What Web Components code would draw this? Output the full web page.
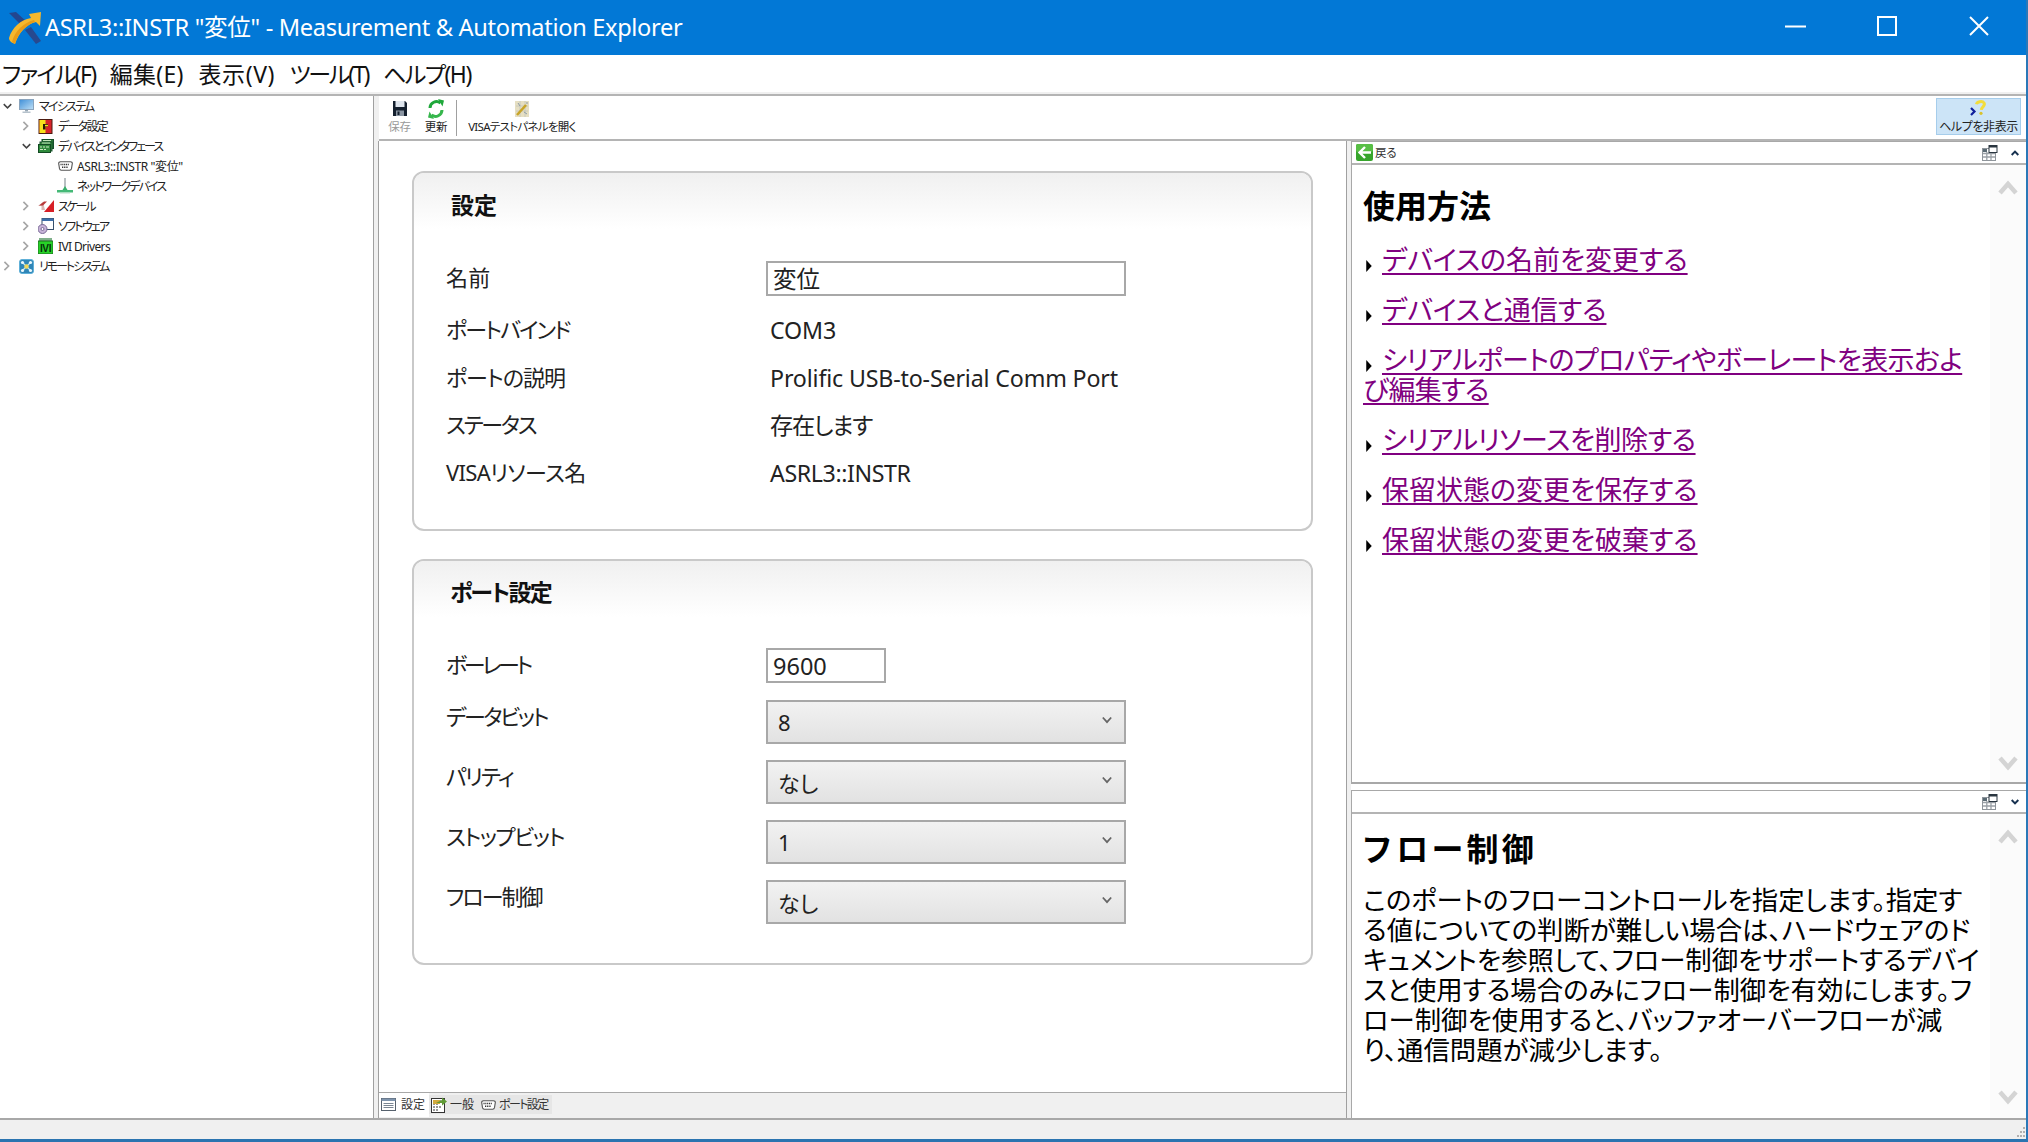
<!DOCTYPE html>
<html lang="ja">
<head>
<meta charset="utf-8">
<title>Measurement &amp; Automation Explorer</title>
<style>
html,body{margin:0;padding:0;background:#fff;}
body{font-family:"Noto Sans","Noto Sans CJK JP",sans-serif;font-feature-settings:"palt";color:#111;overflow:hidden;}
</style>
</head>
<body>
<mx-app>
  <mx-titlebar>ASRL3::INSTR "変位" - Measurement &amp; Automation Explorer</mx-titlebar>
  <mx-menubar>
    <mx-menu style="--ls:-1.7px;--mr:-2.5px">ファイル(F)</mx-menu><mx-menu style="--ls:.3px">編集(E)</mx-menu><mx-menu style="--ls:.6px">表示(V)</mx-menu><mx-menu style="--ls:-2.2px;--mr:-2.5px">ツール(T)</mx-menu><mx-menu style="--ls:-1.5px">ヘルプ(H)</mx-menu>
  </mx-menubar>
  <mx-workspace>
    <mx-tree slot="tree">
      <mx-node level="0" open="down" icon="monitor" style="--ls:-1.77px">マイシステム</mx-node>
      <mx-node level="1" open="right" icon="data" style="--ls:-1.7px">データ設定</mx-node>
      <mx-node level="1" open="down" icon="boards" style="--ls:-1.96px">デバイスとインタフェース</mx-node>
      <mx-node level="2" icon="serial" style="--ls:-.37px">ASRL3::INSTR "変位"</mx-node>
      <mx-node level="2" icon="network" style="--ls:-1.88px">ネットワークデバイス</mx-node>
      <mx-node level="1" open="right" icon="scale" style="--ls:-2.2px">スケール</mx-node>
      <mx-node level="1" open="right" icon="software" style="--ls:-1.77px">ソフトウェア</mx-node>
      <mx-node level="1" open="right" icon="ivi" style="--ls:-.62px">IVI Drivers</mx-node>
      <mx-node level="0" open="right" icon="remote" style="--ls:-2.07px">リモートシステム</mx-node>
    </mx-tree>
    <mx-toolbar slot="toolbar">
      <mx-tool icon="save" disabled style="margin-left:9px;width:23px">保存</mx-tool>
      <mx-tool icon="refresh" style="margin-left:13px;width:24px">更新</mx-tool>
      <mx-divider></mx-divider>
      <mx-tool icon="visa" style="width:110px;--ls:-.7px">VISAテストパネルを開く</mx-tool>
      <mx-toggle>ヘルプを非表示</mx-toggle>
    </mx-toolbar>
    <mx-main slot="main">
      <mx-card heading="設定" style="height:360px;margin-top:30px">
        <mx-field label="名前" style="--ls:.3px"><mx-input style="width:360px">変位</mx-input></mx-field>
        <mx-field label="ポートバインド" style="margin-top:11px;--ls:-1.9px"><mx-value>COM3</mx-value></mx-field>
        <mx-field label="ポートの説明" style="--ls:-1px"><mx-value>Prolific USB-to-Serial Comm Port</mx-value></mx-field>
        <mx-field label="ステータス" style="--ls:-2.2px"><mx-value style="--ls:-1.3px">存在します</mx-value></mx-field>
        <mx-field label="VISAリソース名" style="--ls:-.65px"><mx-value style="--ls:-.4px">ASRL3::INSTR</mx-value></mx-field>
      </mx-card>
      <mx-card heading="ポート設定" second style="height:406px;margin-top:28px">
        <mx-field label="ボーレート" style="margin-top:-1px;--ls:-3.4px"><mx-input style="width:120px">9600</mx-input></mx-field>
        <mx-field label="データビット" raised style="margin-top:17px;--ls:-2.5px"><mx-select>8</mx-select></mx-field>
        <mx-field label="パリティ" raised style="margin-top:16px;--ls:-1.9px"><mx-select>なし</mx-select></mx-field>
        <mx-field label="ストップビット" raised style="margin-top:16px;--ls:-1.55px"><mx-select>1</mx-select></mx-field>
        <mx-field label="フロー制御" raised style="margin-top:16px;--ls:-2px"><mx-select>なし</mx-select></mx-field>
      </mx-card>
    </mx-main>
    <mx-tabs slot="tabs">
      <mx-tab selected icon="form">設定</mx-tab>
      <mx-tab icon="general">一般</mx-tab>
      <mx-tab icon="serial" style="--ls:-1.6px;padding:0 4px 0 3px">ポート設定</mx-tab>
    </mx-tabs>
    <mx-help slot="help">
      <mx-helppane back="戻る" chevron="up" style="height:643px">
        <mx-helphead>使用方法</mx-helphead>
        <mx-link>デバイスの名前を変更する</mx-link>
        <mx-link>デバイスと通信する</mx-link>
        <mx-link style="--ls:-.6px">シリアルポートのプロパティやボーレートを表示およ<br>び編集する</mx-link>
        <mx-link style="--ls:-.4px">シリアルリソースを削除する</mx-link>
        <mx-link>保留状態の変更を保存する</mx-link>
        <mx-link>保留状態の変更を破棄する</mx-link>
      </mx-helppane>
      <mx-helppane chevron="down" style="height:328px;margin-top:6px;border-bottom:0;--sbb:13px">
        <mx-helphead second>フロー制御</mx-helphead>
        <mx-helptext>このポートのフローコントロールを指定します。指定す<br>る値についての判断が難しい場合は、ハードウェアのド<br>キュメントを参照して、フロー制御をサポートするデバイ<br>スと使用する場合のみにフロー制御を有効にします。フ<br>ロー制御を使用すると、バッファオーバーフローが減<br>り、通信問題が減少します。</mx-helptext>
      </mx-helppane>
    </mx-help>
  </mx-workspace>
  <mx-statusbar></mx-statusbar>
</mx-app>

<script>
const ICONS = {
  monitor:`<svg width="15" height="14" viewBox="0 0 15 14"><defs><linearGradient id="m" x1="0" y1="0" x2="1" y2="1"><stop offset="0" stop-color="#3f8fd8"/><stop offset="1" stop-color="#bfe0f6"/></linearGradient></defs><rect x="0.5" y="0.5" width="14" height="10" fill="url(#m)" stroke="#8aa4bd"/><rect x="6" y="11" width="3" height="1.5" fill="#98a8b6"/><rect x="3.5" y="12.5" width="8" height="1.5" fill="#b6c2cc"/></svg>`,
  data:`<svg width="15" height="15" viewBox="0 0 15 15"><rect x="1" y="0.5" width="13" height="14" fill="#d8242a" stroke="#4a1a10"/><rect x="1.5" y="1" width="6" height="13" fill="#f6e21c"/><path d="M5 5h5v2.500h-2.500v3h-2.500z" fill="#2a1a08"/><rect x="7" y="5.800" width="3" height="1.500" fill="#f6e21c"/></svg>`,
  boards:`<svg width="16" height="15" viewBox="0 0 16 15"><rect x="4" y="0.500" width="11.500" height="9" fill="#2c7a3a" stroke="#16502a"/><rect x="2" y="3" width="12" height="9" fill="#3d9446" stroke="#16502a"/><rect x="0.500" y="5.500" width="12" height="8" fill="#2f8a3c" stroke="#124a22"/><path d="M2 8h2M5 8h2M8 8h3M2 10.500h3M6 10.500h2" stroke="#cdebc4" stroke-width="1"/><path d="M5 1.500h8M4 4h8" stroke="#bfe4b8"/></svg>`,
  serial:`<svg width="16" height="10" viewBox="0 0 16 10"><path d="M2.500 .7h11c1 0 2 .8 1.800 2l-.8 5c-.2 1-1 1.600-1.800 1.600h-8.400c-.8 0-1.600-.6-1.800-1.600l-.8-5c-.2-1.200.8-2 1.800-2z" fill="#fff" stroke="#555" stroke-width="1.100"/><path d="M3.500 3.500h9M5 6.300h6" stroke="#333" stroke-width="1.500" stroke-dasharray="1.100 .7"/></svg>`,
  network:`<svg width="16" height="16" viewBox="0 0 16 16"><rect x="7.200" y="0" width="1.600" height="10" fill="#a9b0b3"/><path d="M8 8l2.500 4h-5z" fill="#37b06a"/><rect x="0" y="12" width="16" height="2.500" fill="#45b977"/><rect x="3" y="14.500" width="10" height="1" fill="#b5dfc8"/></svg>`,
  scale:`<svg width="16" height="12" viewBox="0 0 16 12"><path d="M16 0v12H6z" fill="#d71f26"/><path d="M5 2L0 6h3.500v4H7z" fill="#dbb7b4"/><path d="M6 1.500L1 5.500h4l4-4z" fill="#b83a3a"/></svg>`,
  software:`<svg width="16" height="16" viewBox="0 0 16 16"><rect x="4" y="0.500" width="11.500" height="11" fill="#fff" stroke="#38506b"/><rect x="4" y="0.500" width="11.500" height="2.500" fill="#3c6ea8"/><circle cx="4.500" cy="11" r="4.500" fill="#c7b4d8" stroke="#7a6a96"/><circle cx="4.500" cy="11" r="1.500" fill="#fff" stroke="#7a6a96"/></svg>`,
  ivi:`<svg width="15" height="16" viewBox="0 0 15 16"><rect x="1" y="0" width="13" height="4" fill="#7fb08a"/><rect x="0" y="3" width="15" height="13" fill="#27d227" stroke="#1c6a20"/><text x="7.500" y="13.500" text-anchor="middle" font-family="Liberation Sans" font-weight="700" font-size="10" fill="#04300a" letter-spacing="-.4">IVI</text></svg>`,
  remote:`<svg width="15" height="15" viewBox="0 0 15 15"><rect x="0.500" y="0.500" width="14" height="14" rx="2.500" fill="#2f86b8" stroke="#5fb0d8"/><path d="M3 3l9 9M12 3l-9 9" stroke="#bfe6f6" stroke-width="1.300"/><circle cx="3.500" cy="3.500" r="1.600" fill="#e9f7fb"/><circle cx="11.500" cy="3.500" r="1.600" fill="#e9f7fb"/><circle cx="3.500" cy="11.500" r="1.600" fill="#e9f7fb"/><circle cx="11.500" cy="11.500" r="1.600" fill="#e9f7fb"/><circle cx="7.500" cy="7.500" r="2.200" fill="#f3d95a"/></svg>`,
  save:`<svg width="14" height="15" viewBox="0 0 14 15"><path d="M0 0h12l2 2v13H0z" fill="#14202e"/><rect x="2.500" y="0" width="9" height="6" fill="#dfe6ee"/><rect x="3" y="9.500" width="8" height="5.500" fill="#8b96a3"/><rect x="4.500" y="10.500" width="2" height="3.500" fill="#14202e"/></svg>`,
  refresh:`<svg width="18" height="20" viewBox="0 0 18 20"><path d="M3 9a6.500 6.500 0 0 1 10.500-5" fill="none" stroke="#1fa83a" stroke-width="3"/><path d="M11 0l6 1.500-1.500 6z" fill="#1fa83a"/><path d="M15 11a6.500 6.500 0 0 1-10.500 5" fill="none" stroke="#36b64c" stroke-width="3"/><path d="M7 20l-6-1.500 1.500-6z" fill="#36b64c"/></svg>`,
  visa:`<svg width="14" height="16" viewBox="0 0 14 16"><rect x="0" y="0" width="14" height="16" fill="#e6dfc2"/><path d="M1 5h12M1 10h12M5 0v16M10 0v16" stroke="#c2c4bc" stroke-width=".8"/><path d="M2 14L11 4" stroke="#c8a428" stroke-width="2.600"/><path d="M3 2l2 3M9 11l3 2M12 1v2" stroke="#8d9ba6" stroke-width="1"/></svg>`,
  helpoff:`<svg width="18" height="20" viewBox="0 0 18 20"><path d="M6.500 5.200c.4-2.600 5.800-3.800 7.600-1.200 1.600 2.500-2.500 4-2.800 6.800" fill="none" stroke="#f2dc3c" stroke-width="3"/><circle cx="11" cy="14.300" r="1.600" fill="#d9c22c"/><path d="M1 9l3.500 3.500L1 16" fill="none" stroke="#10209c" stroke-width="2.200"/></svg>`,
  back:`<svg width="17" height="17" viewBox="0 0 17 17"><rect x="0" y="0" width="17" height="17" rx="2" fill="#37a52c"/><rect x="0" y="0" width="17" height="8" rx="2" fill="#58bf45"/><path d="M15 8.500H5M9 3L3.500 8.500 9 14" fill="none" stroke="#fff" stroke-width="2.400"/></svg>`,
  tile:`<svg width="16" height="16" viewBox="0 0 16 16"><rect x="0.500" y="3.500" width="13" height="12" fill="#fff" stroke="#8f959b"/><rect x="1" y="4" width="4" height="3" fill="#5a6a74"/><path d="M1 8.500h12M1 12h12M4.800 7v8M9 7v8" stroke="#9aa0a6" stroke-width="1.300"/><rect x="7" y="0.500" width="8" height="7" fill="#fff" stroke="#2a3640"/><rect x="7" y="0.500" width="8" height="2" fill="#2a3640"/></svg>`,
  form:`<svg width="15" height="13" viewBox="0 0 15 13"><rect x="0.500" y="0.500" width="14" height="12" fill="#fff" stroke="#56616d"/><rect x="0.500" y="0.500" width="14" height="2.500" fill="#7e94ad"/><path d="M2.500 5.500h10M2.500 7.500h10M2.500 9.500h10" stroke="#7a8592"/></svg>`,
  general:`<svg width="16" height="16" viewBox="0 0 16 16"><rect x="0.500" y="1.500" width="13" height="14" fill="#fff" stroke="#333"/><path d="M2 4h9M2 7h5M2 10h9M2 13h5" stroke="#333" stroke-dasharray="2 1"/><rect x="2" y="3" width="7" height="4" fill="#d2aa3e"/><path d="M5 6l6-3v-2.500l5 4-5 4v-2.500z" fill="#5f9a35"/></svg>`
};

// every element below only needs css + markup, attributes are read on connect
class MxElement extends HTMLElement{
  connectedCallback(){
    if(this.shadowRoot) return;
    const shadow = this.attachShadow({mode:'open'});
    shadow.innerHTML = `<style>${this.constructor.css}</style>${this.render()}`;
  }
  render(){ return '<slot></slot>'; }
}
const plain = (name, css, render) => {
  customElements.define(name, class extends MxElement{
    static css = css;
    render(){ return render ? render(this) : '<slot></slot>'; }
  });
};
const chevron = dir => {
  const pts = dir==='down' ? '1,1 6,6 11,1' : dir==='up' ? '1,6 6,1 11,6' : '1,1 6,6 1,11';
  return pts;
};
const UI_FONT = `"Noto Sans","Noto Sans CJK JP",sans-serif`;
const HELP_FONT = `"Liberation Sans","Noto Sans CJK JP",sans-serif`;

plain('mx-icon', `:host{display:inline-flex;align-items:center;justify-content:center;line-height:0;}`,
  el => ICONS[el.getAttribute('name')]);

plain('mx-app', `:host{display:flex;flex-direction:column;width:2028px;height:1142px;box-sizing:border-box;border-right:2px solid #2a78b8;border-bottom:3px solid #2a74b0;overflow:hidden;background:#fff;}`);

plain('mx-titlebar', `
  :host{display:flex;align-items:center;height:55px;margin-right:-2px;background:#0278d6;color:#fff;flex:none;}
  .logo{margin-left:8px;width:34px;height:34px;margin-top:1px;}
  .text{margin-left:3px;margin-bottom:3px;font:23.600px ${UI_FONT};font-feature-settings:"palt";letter-spacing:-.33px;white-space:nowrap;}
  .ctl{margin-left:auto;display:flex;padding-right:3px;}
  .ctl div{width:92px;height:52px;padding-bottom:3px;display:flex;align-items:center;justify-content:center;}
`, () => `
  <svg class="logo" viewBox="0 0 34 34">
    <path d="M1 2l7-1 12 11-6 3z" fill="#23468f"/><path d="M17 19l6-3 10 14-5 3z" fill="#27498f"/>
    <path d="M1 27C4 17 12 9 23 7l-2-4 12-2-1 14-4-4C19 13 11 21 7 33 4 32 1 30 1 27z" fill="#f5b82e"/>
    <path d="M7 33c3-11 11-19 20-22l-1-2C15 12 7 20 4 31z" fill="#e89c18"/>
  </svg>
  <span class="text"><slot></slot></span>
  <div class="ctl">
    <div><svg width="21" height="3"><rect width="21" height="2" y="0.500" fill="#fff"/></svg></div>
    <div><svg width="20" height="20"><rect x="1" y="1" width="18" height="18" fill="none" stroke="#fff" stroke-width="2"/></svg></div>
    <div><svg width="20" height="20"><path d="M1 1l18 18M19 1L1 19" stroke="#fff" stroke-width="2"/></svg></div>
  </div>`);

plain('mx-menubar', `:host{display:flex;gap:15px;height:37px;align-items:center;padding-left:2px;flex:none;border-bottom:2px solid #f0f0f0;background:#fff;}`);
plain('mx-menu', `:host{display:block;font:23px ${UI_FONT};font-feature-settings:"palt";letter-spacing:var(--ls,0);margin-right:calc(var(--ls,0px) * -1 + var(--mr,0px));margin-bottom:1px;color:#111;white-space:nowrap;}`);

plain('mx-workspace', `
  :host{display:grid;flex:1;min-height:0;grid-template-columns:374px 1fr;border-top:2px solid #b4b4b4;border-bottom:2px solid #a8a8a8;}
  .left{grid-row:1;grid-column:1;background:#fff;border-right:1px solid #a0a0a0;box-sizing:border-box;overflow:hidden;}
  .right{grid-row:1;grid-column:2;display:flex;flex-direction:column;min-width:0;min-height:0;border-left:5px solid #f0f0f0;box-sizing:border-box;}
  .top{height:45px;box-sizing:border-box;border-bottom:2px solid #b4b4b4;flex:none;}
  .body{display:grid;grid-template-columns:968px 1fr;flex:1;min-height:0;}
  .center{display:flex;flex-direction:column;min-height:0;border-left:1px solid #a0a0a0;margin-left:-1px;border-right:1px solid #a0a0a0;}
  .side{border-left:4px solid #f0f0f0;min-width:0;}
`, () => `
  <div class="left"><slot name="tree"></slot></div>
  <div class="right">
    <div class="top"><slot name="toolbar"></slot></div>
    <div class="body">
      <div class="center"><slot name="main"></slot><slot name="tabs"></slot></div>
      <div class="side"><slot name="help"></slot></div>
    </div>
  </div>`);

plain('mx-tree', `:host{display:block;font:12px ${UI_FONT};font-feature-settings:"palt";color:#222;}`);
plain('mx-node', `
  :host{display:flex;align-items:center;height:20px;white-space:nowrap;}
  .exp{width:19px;height:20px;flex:none;display:flex;align-items:center;padding-left:3px;box-sizing:border-box;}
  .ic{width:15px;display:flex;justify-content:center;margin-right:5px;flex:none;}
  svg.c{overflow:visible;}
  .t{letter-spacing:var(--ls,-.6px);}
`, el => {
  const open = el.getAttribute('open');
  const level = +el.getAttribute('level');
  const col = open==='down' ? '#444' : '#a6a6a6';
  const w = open==='down' ? 9 : 7, h = open==='down' ? 6 : 10;
  const exp = open ? `<svg class="c" width="${w}" height="${h}" viewBox="${open==='down'?'0 0 12 7':'0 0 7 12'}"><polyline points="${chevron(open)}" fill="none" stroke="${col}" stroke-width="2"/></svg>` : '';
  return `<div style="width:${level*19}px;flex:none"></div><div class="exp">${exp}</div><div class="ic"><mx-icon name="${el.getAttribute('icon')}"></mx-icon></div><span class="t"><slot></slot></span>`;
});

plain('mx-toolbar', `:host{display:flex;align-items:flex-start;height:41px;padding-top:2px;box-sizing:border-box;position:relative;}`);
plain('mx-tool', `
  :host{display:flex;flex-direction:column;align-items:center;flex:none;white-space:nowrap;font:11.500px ${UI_FONT};font-feature-settings:"palt";letter-spacing:var(--ls,-.3px);color:#222;}
  :host([disabled]){color:#9a9a9a;}
  .ic{height:21px;display:flex;align-items:center;justify-content:center;}
  .t{line-height:15px;}
`, el => `<div class="ic"><mx-icon name="${el.getAttribute('icon')}"></mx-icon></div><span class="t"><slot></slot></span>`);
plain('mx-divider', `:host{display:block;width:1px;height:36px;background:#a0a0a0;margin:2px 10px 0 8px;flex:none;}`);
plain('mx-toggle', `
  :host{position:absolute;left:1557px;top:2px;width:85px;height:37px;box-sizing:border-box;display:flex;flex-direction:column;align-items:center;background:#cce4f7;border:1px solid #a6cdeb;font:12px ${UI_FONT};font-feature-settings:"palt";letter-spacing:-.4px;color:#222;white-space:nowrap;}
  .ic{height:21px;line-height:0;}
  .t{line-height:13px;}
`, () => `<div class="ic"><mx-icon name="helpoff"></mx-icon></div><span class="t"><slot></slot></span>`);

plain('mx-main', `:host{display:flex;flex-direction:column;flex:1;min-height:0;padding-left:33px;background:#fff;box-sizing:border-box;}`);
plain('mx-card', `
  :host{display:block;width:901px;box-sizing:border-box;border:2px solid #c9c9c9;border-radius:12px;flex:none;overflow:hidden;}
  .head{height:56px;box-sizing:border-box;padding:17px 0 0 37px;background:linear-gradient(#f0f0f0,#fff);font:700 23px/30px ${UI_FONT};font-feature-settings:"palt";color:#111;}
  :host([second]) .head{padding:16px 0 0 36px;letter-spacing:-1.8px;}
  .body{padding:32px 0 0 32px;}
`, el => `<div class="head">${el.getAttribute('heading')}</div><div class="body"><slot></slot></div>`);
plain('mx-field', `
  :host{display:grid;grid-template-columns:320px 1fr;align-items:center;font:22px ${UI_FONT};font-feature-settings:"palt";color:#222;}
  .l{letter-spacing:var(--ls,0);white-space:nowrap;margin-bottom:3px;line-height:24px;}
  :host([raised]) .l{margin-top:-10px;}
`, el => `<span class="l">${el.getAttribute('label')}</span><div style="--ls:initial"><slot></slot></div>`);
plain('mx-value', `:host{display:block;height:47.500px;line-height:47.500px;padding-left:4px;font-size:23.200px;letter-spacing:var(--ls,-.15px);white-space:nowrap;}`);
plain('mx-input', `:host{display:block;height:35px;line-height:33px;box-sizing:border-box;border:2px solid #a8a8a8;background:#fff;padding-left:5px;font-size:23.500px;color:#222;}`);
plain('mx-select', `
  :host{display:flex;align-items:center;width:360px;height:44px;box-sizing:border-box;border:2px solid #a8a8a8;background:linear-gradient(#f2f2f2,#e2e2e2);padding-left:10px;position:relative;color:#222;}
  .t{flex:1;}
  svg{margin-right:12px;margin-top:-4px;}
`, () => `<span class="t"><slot></slot></span><svg width="10" height="8" viewBox="0 0 12 8"><polyline points="1,1 6,6.500 11,1" fill="none" stroke="#666" stroke-width="2.200"/></svg>`);

plain('mx-tabs', `:host{display:flex;align-items:flex-start;height:26px;flex:none;background:#f0f0f0;border-top:1px solid #a8a8a8;box-sizing:border-box;}`);
plain('mx-tab', `
  :host{display:flex;align-items:center;gap:3px;height:19px;margin-top:2px;padding:0 3px 0 2px;background:#e6e6e6;font:12px/17px ${UI_FONT};font-feature-settings:"palt";color:#333;white-space:nowrap;}
  :host([selected]){background:#fff;height:24px;margin-top:0;padding:0 4px 2px 2px;gap:5px;box-sizing:border-box;}
  .t{letter-spacing:var(--ls,0);}
`, el => `<mx-icon name="${el.getAttribute('icon')}"></mx-icon><span class="t"><slot></slot></span>`);

plain('mx-help', `:host{display:flex;flex-direction:column;background:#fff;height:100%;}`);
plain('mx-helppane', `
  :host{display:flex;flex-direction:column;flex:none;box-sizing:border-box;border-top:1px solid #a8a8a8;border-bottom:2px solid #a8a8a8;border-left:1px solid #a8a8a8;position:relative;background:#fff;}
  .bar{height:23px;flex:none;display:flex;align-items:center;padding-left:4px;box-sizing:border-box;border-bottom:2px solid #b4b4b4;font:11.500px ${UI_FONT};font-feature-settings:"palt";letter-spacing:-.2px;color:#333;}
  .bar span{margin-left:2px;margin-bottom:2px;}
  .bar .r{margin-left:auto;display:flex;align-items:center;gap:13px;padding-right:7px;}
  .view{flex:1;display:flex;min-height:0;}
  .content{flex:1;padding-left:11px;min-width:0;}
  .sb{width:36px;flex:none;background:#fbfbfb;display:flex;flex-direction:column;justify-content:space-between;align-items:center;padding:15px 0 var(--sbb,11px);box-sizing:border-box;}
`, el => {
  const back = el.getAttribute('back');
  const dir = el.getAttribute('chevron');
  const arrow = p => `<svg width="20" height="15" viewBox="0 0 20 15"><polyline points="${p}" fill="none" stroke="#d4d4d4" stroke-width="4.500"/></svg>`;
  return `<div class="bar">${back ? `<mx-icon name="back"></mx-icon><span>${back}</span>` : ''}
    <div class="r"><mx-icon name="tile"></mx-icon><svg width="8" height="6" viewBox="0 0 12 8"><polyline points="${dir==='up'?'1,7 6,2 11,7':'1,1 6,6 11,1'}" fill="none" stroke="#16304f" stroke-width="3"/></svg></div></div>
    <div class="view"><div class="content"><slot></slot></div><div class="sb">${arrow('2,13 10,4 18,13')}${arrow('2,2 10,11 18,2')}</div></div>`;
});
plain('mx-helphead', `
  :host{display:block;margin:19px 0 18px;font:700 32px/44px ${UI_FONT};font-feature-settings:"palt";color:#000;white-space:nowrap;}
  :host([second]){margin:13px 0 15px -2px;font-feature-settings:normal;letter-spacing:3.200px;}
`);
plain('mx-link', `
  :host{display:block;width:640px;margin:0 0 20px;font:27px/30px ${HELP_FONT};font-feature-settings:"palt";color:#800080;white-space:nowrap;}
  a{color:#800080;letter-spacing:var(--ls,0);text-decoration:underline;text-decoration-thickness:1.500px;text-underline-offset:3px;}
  svg{margin:0 10px 0 3px;vertical-align:-2px;}
`, () => `<svg width="6" height="12" viewBox="0 0 5 11"><path d="M0 0l5 5.500L0 11z" fill="#000"/></svg><a href="#"><slot></slot></a>`);
plain('mx-helptext', `:host{display:block;font:26.400px/30px ${HELP_FONT};font-feature-settings:"palt";color:#000;white-space:nowrap;}`);

plain('mx-statusbar', `
  :host{display:flex;justify-content:flex-end;align-items:flex-end;height:19px;flex:none;background:#f0f0f0;}
  svg{margin:0 1px 1px 0;}
`, () => `<svg width="8" height="11" viewBox="0 0 8 11"><g fill="#b0b0b0"><rect x="6" y="0" width="2" height="2"/><rect x="3" y="4" width="2" height="2"/><rect x="6" y="4" width="2" height="2"/><rect x="0" y="8" width="2" height="2"/><rect x="3" y="8" width="2" height="2"/><rect x="6" y="8" width="2" height="2"/></g></svg>`);
</script>
</body>
</html>
